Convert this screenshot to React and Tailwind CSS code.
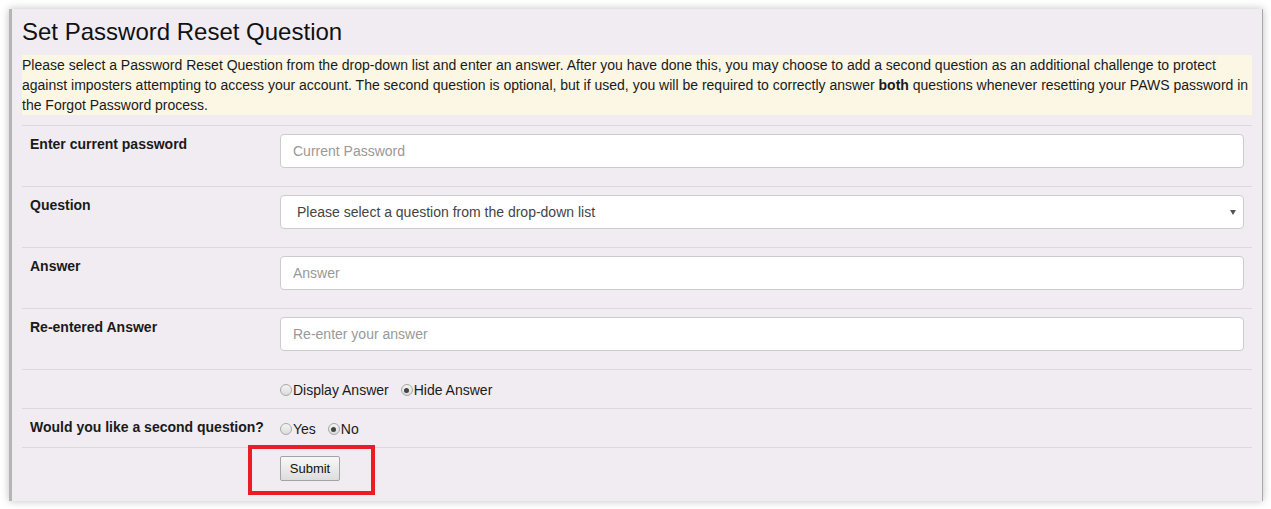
const Radio = ({ checked }) => (
  <span className="inline-flex items-center justify-center w-[12px] h-[12px] rounded-full border border-[#a9a9a9] bg-gradient-to-b from-[#f4f4f4] to-[#dcdcdc] mr-[1px] shrink-0">
    {checked && <span className="w-[5px] h-[5px] rounded-full bg-[#444]" />}
  </span>
)

const InputRow = ({ label, placeholder }) => (
  <div className="flex border-t border-[#dcd9dd] h-[61px]">
    <div className="w-[250px] px-2 pt-2 font-bold leading-5">{label}</div>
    <div className="flex-1 px-2 pt-2">
      <input
        type="text"
        placeholder={placeholder}
        className="w-full h-[34px] px-3 bg-white border border-[#cccccc] rounded-[4px] text-[14px] text-[#555] placeholder:text-[#999] focus:outline-none"
      />
    </div>
  </div>
)

const App = () => {
  return (
    <div className="bg-white min-h-screen pt-[9px] pl-[9px] pr-[8px] text-[14px] text-[#1a1a1a] font-['Liberation_Sans',Arial,sans-serif]">
      <div className="bg-[#f0ecf1] border-l-[3px] border-r border-l-[#b5b5b5] border-r-[#a8a8a8] px-[10px] pt-[10px] h-[492px] shadow-[0_0_8px_rgba(0,0,0,0.25)]">
        <h3 className="text-[24px] leading-[26px] text-[#111] mb-[10px]">
          Set Password Reset Question
        </h3>
        <p className="bg-[#fcf6e4] leading-5 mb-[10px]">
          Please select a Password Reset Question from the drop-down list and enter an answer. After you have done this, you may choose to add a second question as an additional challenge to protect against imposters attempting to access your account. The second question is optional, but if used, you will be required to correctly answer <b>both</b> questions whenever resetting your PAWS password in the Forgot Password process.
        </p>

        <InputRow label="Enter current password" placeholder="Current Password" />

        <div className="flex border-t border-[#dcd9dd] h-[61px]">
          <div className="w-[250px] px-2 pt-2 font-bold leading-5">Question</div>
          <div className="flex-1 px-2 pt-2">
            <div className="relative h-[34px] bg-white border border-[#cccccc] rounded-[4px] flex items-center pl-4 text-[#444]">
              Please select a question from the drop-down list
              <span className="absolute right-[7px] top-[14px] w-0 h-0 border-l-[3px] border-r-[3px] border-t-[5px] border-l-transparent border-r-transparent border-t-[#555]" />
            </div>
          </div>
        </div>

        <InputRow label="Answer" placeholder="Answer" />
        <InputRow label="Re-entered Answer" placeholder="Re-enter your answer" />

        <div className="flex border-t border-[#dcd9dd] h-[39px]">
          <div className="w-[250px] px-2 pt-2" />
          <div className="flex-1 px-2 pt-[10px] flex items-start leading-5">
            <label className="flex items-center">
              <Radio />
              Display Answer
            </label>
            <label className="flex items-center ml-[12px]">
              <Radio checked />
              Hide Answer
            </label>
          </div>
        </div>

        <div className="flex border-t border-[#dcd9dd] h-[39px]">
          <div className="w-[250px] px-2 pt-2 font-bold leading-5 whitespace-nowrap">
            Would you like a second question?
          </div>
          <div className="flex-1 px-2 pt-[10px] flex items-start leading-5">
            <label className="flex items-center">
              <Radio />
              Yes
            </label>
            <label className="flex items-center ml-[12px]">
              <Radio checked />
              No
            </label>
          </div>
        </div>

        <div className="flex border-t border-[#dcd9dd]">
          <div className="w-[250px]" />
          <div className="relative flex-1 px-2 pt-[8px]">
            <button className="h-[25px] w-[60px] text-[13px] text-[#111] border border-[#a3a3a3] rounded-[2px] bg-gradient-to-b from-[#f8f8f8] to-[#dddddd]">
              Submit
            </button>
            <div className="absolute left-[-24px] top-[-3px] w-[127px] h-[50px] border-[4px] border-[#ea1c24]" />
          </div>
        </div>
      </div>
    </div>
  )
}

export default App
